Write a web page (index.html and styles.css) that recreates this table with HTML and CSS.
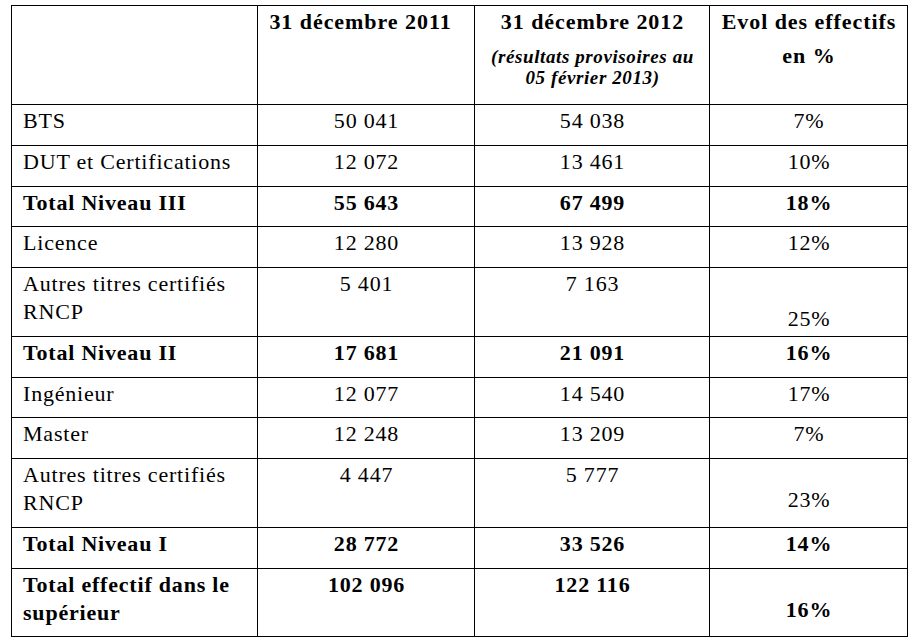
FILE: index.html
```html
<!DOCTYPE html>
<html lang="fr">
<head>
<meta charset="utf-8">
<title>Effectifs</title>
<link rel="stylesheet" href="styles.css">
</head>
<body>
<div class="page">
<table class="stats">
  <colgroup>
    <col class="c-label">
    <col class="c-2011">
    <col class="c-2012">
    <col class="c-evol">
  </colgroup>
  <thead>
    <tr>
      <th class="head-empty"></th>
      <th class="head head-shift"><p class="h-line">31 décembre 2011</p></th>
      <th class="head">
        <p class="h-line">31 décembre 2012</p>
        <p class="h-note">(résultats provisoires au<br>05 février 2013)</p>
      </th>
      <th class="head">
        <p class="h-line">Evol des effectifs</p>
        <p class="h-line h-second">en %</p>
      </th>
    </tr>
  </thead>
  <tbody>
    <tr><td class="label">BTS</td><td class="num">50 041</td><td class="num">54 038</td><td class="num">7%</td></tr>
    <tr><td class="label">DUT et Certifications</td><td class="num">12 072</td><td class="num">13 461</td><td class="num">10%</td></tr>
    <tr class="total"><td class="label">Total Niveau III</td><td class="num">55 643</td><td class="num">67 499</td><td class="num">18%</td></tr>
    <tr><td class="label">Licence</td><td class="num">12 280</td><td class="num">13 928</td><td class="num">12%</td></tr>
    <tr><td class="label">Autres titres certifiés<br>RNCP</td><td class="num">5 401</td><td class="num">7 163</td><td class="num pct-lower">25%</td></tr>
    <tr class="total"><td class="label">Total Niveau II</td><td class="num">17 681</td><td class="num">21 091</td><td class="num">16%</td></tr>
    <tr><td class="label">Ingénieur</td><td class="num">12 077</td><td class="num">14 540</td><td class="num">17%</td></tr>
    <tr><td class="label">Master</td><td class="num">12 248</td><td class="num">13 209</td><td class="num">7%</td></tr>
    <tr><td class="label">Autres titres certifiés<br>RNCP</td><td class="num">4 447</td><td class="num">5 777</td><td class="num pct-low">23%</td></tr>
    <tr class="total"><td class="label">Total Niveau I</td><td class="num">28 772</td><td class="num">33 526</td><td class="num">14%</td></tr>
    <tr class="total"><td class="label">Total effectif dans le<br>supérieur</td><td class="num">102 096</td><td class="num">122 116</td><td class="num pct-low2">16%</td></tr>
  </tbody>
</table>
</div>
</body>
</html>
```

FILE: styles.css
```css
html, body {
  margin: 0;
  padding: 0;
  background: #ffffff;
}

.page {
  padding: 5px 0 0 11px;
}

.stats {
  border-collapse: collapse;
  table-layout: fixed;
  width: 896px;
  font-family: "Liberation Serif", "Times New Roman", serif;
  font-size: 22px;
  letter-spacing: 0.8px;
  color: #000;
}

.c-label { width: 246px; }
.c-2011 { width: 217px; }
.c-2012 { width: 235px; }
.c-evol { width: 198px; }

.stats th,
.stats td {
  border: 1px solid #000;
  padding: 2px 10px 9.75px 11px;
  line-height: 28px;
  vertical-align: top;
}

.stats th {
  font-weight: bold;
  text-align: center;
  height: 86px;
  padding-bottom: 10px;
  letter-spacing: 0.95px;
}

.h-line {
  margin: 0;
}

.h-second {
  margin-top: 6px;
}

.stats .head-shift {
  padding-right: 22px;
}

.h-note {
  margin: 10px 0 0;
  font-size: 19px;
  line-height: 21px;
  font-style: italic;
  font-weight: bold;
  letter-spacing: 0.6px;
}

.label {
  text-align: left;
}

.num {
  text-align: center;
}

.total td {
  font-weight: bold;
}

.stats .pct-low {
  padding-top: 27px;
  padding-bottom: 0;
}

.stats .pct-low2 {
  padding-top: 27px;
  padding-bottom: 0;
}

.stats .pct-lower {
  padding-top: 37px;
  padding-bottom: 0;
}
```
